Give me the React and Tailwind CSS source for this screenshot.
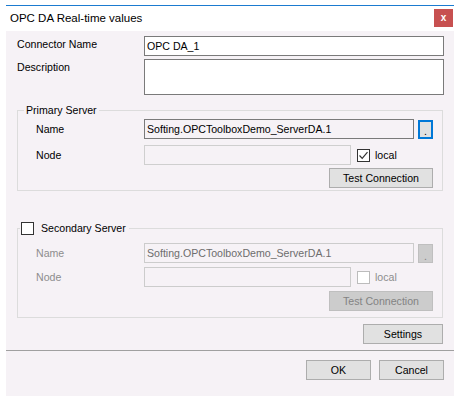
import React from "react";

function Field({ children, className = "" }) {
  return (
    <div className={`h-[20px] flex items-center pl-[2px] text-black ${className}`}>
      {children}
    </div>
  );
}

function Check({ checked, disabled }) {
  return (
    <span
      className={`w-[13px] h-[13px] shrink-0 border flex items-center justify-center bg-white ${
        disabled ? "border-[#bcbcbc]" : "border-[#333333]"
      }`}
    >
      {checked && (
        <svg width="11" height="11" viewBox="0 0 11 11">
          <path d="M1.5 5.5 L4.2 8.3 L9.5 2.2" fill="none" stroke="#333" strokeWidth="1.2" />
        </svg>
      )}
    </span>
  );
}

function Btn({ children, className = "", disabled }) {
  return (
    <div
      className={`h-[20px] flex items-center justify-center border ${
        disabled
          ? "bg-[#cccccc] border-[#bfbfbf] text-[#838383]"
          : "bg-[#e1e1e1] border-[#adadad] text-black"
      } ${className}`}
    >
      {children}
    </div>
  );
}

export default function App() {
  return (
    <div className="w-[460px] h-[396px] bg-white pt-[5px] px-[6px] font-['Liberation_Sans',Arial,sans-serif] text-[10.6px] leading-[13px] text-black overflow-hidden">
      {/* title bar */}
      <div className="border-t border-[#1b7bd0] h-[26px] flex items-start justify-between">
        <div className="text-[11.5px] leading-[14px] pl-[4px] pt-[5px]">OPC DA Real-time values</div>
        <div className="mt-[3px] mr-[1px] w-[19px] h-[18px] bg-[#c75050] text-white flex items-center justify-center text-[10px] font-bold leading-none pb-[1px]">
          x
        </div>
      </div>

      {/* client area */}
      <div className="bg-[#f6f2f6] h-[365px] flex flex-col">
        <div className="flex mt-[5px] pl-[11px]">
          <div className="w-[127px] pt-[2px]">Connector Name</div>
          <Field className="w-[300px] border border-[#7a7a7a] bg-white">OPC DA_1</Field>
        </div>
        <div className="flex mt-[3px] pl-[11px]">
          <div className="w-[127px] pt-[2px]">Description</div>
          <div className="w-[300px] h-[36px] border border-[#7a7a7a] bg-white" />
        </div>

        {/* primary server */}
        <fieldset className="mt-[8px] ml-[11px] w-[426px] border border-[#dcdcdc] pl-[18px] pr-[9px] pb-[2px]">
          <legend className="-ml-[12px] px-[2px] leading-[14px]">Primary Server</legend>
          <div className="flex items-center mt-[2px]">
            <div className="w-[108px]">Name</div>
            <Field className="w-[270px] border border-[#7a7a7a]">Softing.OPCToolboxDemo_ServerDA.1</Field>
            <div className="ml-[4px] w-[15px] h-[19px] border-2 border-[#0078d7] bg-[#e1e1e1] flex items-end justify-center leading-[12px]">
              .
            </div>
          </div>
          <div className="flex items-center mt-[6px]">
            <div className="w-[108px]">Node</div>
            <Field className="w-[207px] border border-[#cfcfcf]" />
            <span className="ml-[6px]">
              <Check checked />
            </span>
            <span className="ml-[5px]">local</span>
          </div>
          <div className="flex justify-end mt-[3px]">
            <Btn className="w-[104px]">Test Connection</Btn>
          </div>
        </fieldset>

        {/* secondary server */}
        <fieldset className="mt-[30px] ml-[11px] w-[426px] border border-[#dcdcdc] pl-[18px] pr-[9px] pb-[6px]">
          <legend className="-ml-[16px] px-[1px] leading-[14px] flex items-center">
            <Check />
            <span className="ml-[7px] pr-[2px]">Secondary Server</span>
          </legend>
          <div className="flex items-center mt-[8px] text-[#8d8d8d]">
            <div className="w-[108px]">Name</div>
            <Field className="w-[270px] border border-[#cccccc] !text-[#6d6d6d]">
              Softing.OPCToolboxDemo_ServerDA.1
            </Field>
            <div className="ml-[4px] w-[15px] h-[19px] border border-[#bfbfbf] bg-[#cccccc] text-[#838383] flex items-end justify-center leading-[12px]">
              .
            </div>
          </div>
          <div className="flex items-center mt-[4px] text-[#8d8d8d]">
            <div className="w-[108px]">Node</div>
            <Field className="w-[207px] border border-[#cccccc]" />
            <span className="ml-[6px]">
              <Check disabled />
            </span>
            <span className="ml-[5px]">local</span>
          </div>
          <div className="flex justify-end mt-[4px]">
            <Btn className="w-[104px]" disabled>
              Test Connection
            </Btn>
          </div>
        </fieldset>

        <div className="flex justify-end mt-[6px] pr-[11px]">
          <Btn className="w-[80px]">Settings</Btn>
        </div>

        <div className="mt-[6px] border-t border-[#a0a0a0]" />

        <div className="flex justify-end gap-[8px] mt-[9px] pr-[10px]">
          <Btn className="w-[65px]">OK</Btn>
          <Btn className="w-[65px]">Cancel</Btn>
        </div>
      </div>
    </div>
  );
}
